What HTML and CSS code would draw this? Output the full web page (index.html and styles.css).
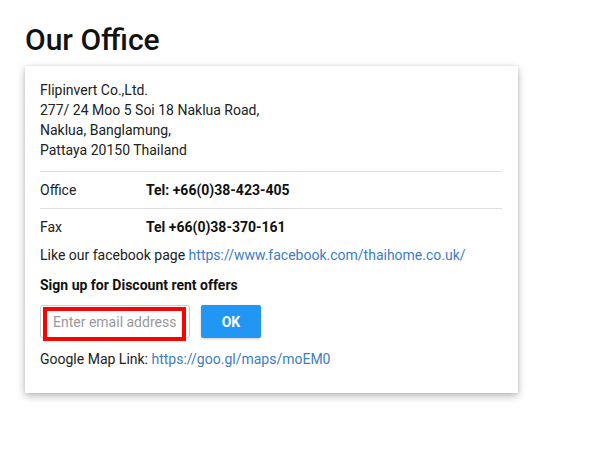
FILE: index.html
```html
<!DOCTYPE html>
<html>
<head>
<meta charset="utf-8">
<link rel="stylesheet" href="styles.css">
</head>
<body>
<div class="page">
  <h1 class="title">Our Office</h1>
  <div class="card">
    <p class="address">Flipinvert Co.,Ltd.<br>277/ 24 Moo 5 Soi 18 Naklua Road,<br>Naklua, Banglamung,<br>Pattaya 20150 Thailand</p>
    <table class="contacts">
      <tr><td class="label">Office</td><td class="value">Tel: +66(0)38-423-405</td></tr>
      <tr><td class="label">Fax</td><td class="value">Tel +66(0)38-370-161</td></tr>
    </table>
    <p class="line">Like our facebook page <a class="link" href="#">https://www.facebook.com/thaihome.co.uk/</a></p>
    <p class="signup">Sign up for Discount rent offers</p>
    <div class="form">
      <div class="input-wrap">
        <input class="email" type="text" placeholder="Enter email address">
        <span class="highlight"></span>
      </div>
      <button class="ok">OK</button>
    </div>
    <p class="line map">Google Map Link: <a class="link" href="#">https://goo.gl/maps/moEM0</a></p>
  </div>
</div>
</body>
</html>
```

FILE: styles.css
```css
html, body {
  margin: 0;
  padding: 0;
  background: #fff;
}
body {
  font-family: Roboto, "Liberation Sans", Arial, sans-serif;
  font-size: 14px;
  line-height: 20px;
  color: #212121;
}
.page {
  padding: 22px 0 40px 25px;
  width: 493px;
}
.title {
  margin: 0;
  font-size: 30px;
  line-height: 35px;
  font-weight: 500;
  color: #111;
}
.card {
  margin-top: 9px;
  width: 493px;
  box-sizing: border-box;
  padding: 14px 16px 24px 15px;
  background: #fff;
  box-shadow: 0 3px 8px rgba(0,0,0,0.28), 0 0 3px rgba(0,0,0,0.08);
}
.address {
  margin: 0;
}
.contacts {
  margin-top: 11px;
  width: 100%;
  border-collapse: collapse;
}
.contacts td {
  padding: 8px 0;
  border-top: 1px solid #ddd;
  vertical-align: top;
}
.contacts .label {
  width: 106px;
}
.contacts .value {
  font-weight: 700;
  color: #111;
}
.line {
  margin: 0;
}
.link {
  color: #3b7dc4;
  text-decoration: none;
}
.signup {
  margin: 10px 0 0;
  font-weight: 700;
  color: #111;
}
.form {
  margin-top: 10px;
  display: flex;
  gap: 11px;
}
.input-wrap {
  position: relative;
  width: 150px;
  height: 33px;
}
.email {
  width: 150px;
  height: 33px;
  box-sizing: border-box;
  border: 1px solid #ccc;
  border-radius: 3px;
  padding: 0 12px;
  font-family: inherit;
  font-size: 14px;
  color: #333;
  outline: none;
}
.email::placeholder {
  color: #999;
}
.highlight {
  position: absolute;
  left: 3px;
  top: 2px;
  width: 143px;
  height: 34px;
  box-sizing: border-box;
  border: 4px solid #ff0000;
  pointer-events: none;
}
.ok {
  width: 60px;
  height: 33px;
  border: none;
  border-radius: 2px;
  background: #2196f3;
  color: #fff;
  font-family: inherit;
  font-size: 14px;
  font-weight: 700;
  box-shadow: 0 1px 3px rgba(0,0,0,0.2);
}
.map {
  margin-top: 11px;
}
```
